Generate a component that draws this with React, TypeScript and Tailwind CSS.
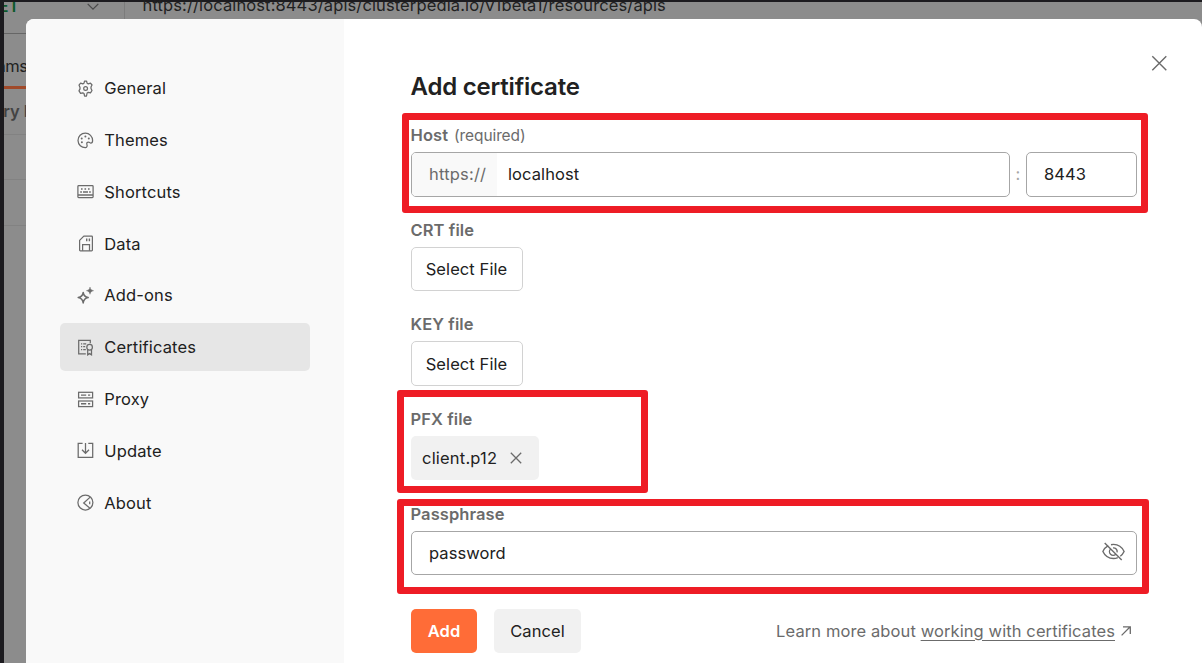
import type { ReactNode } from "react";

const icon = (children: ReactNode) => (
  <svg viewBox="0 0 17 17" className="h-[17px] w-[17px] shrink-0" fill="none" stroke="#6b6b6b" strokeWidth="1.25">
    {children}
  </svg>
);

const GearIcon = icon(
  <>
    <path
      d="M7.6 1h1.9l.6 2.2 1.2.7 2.2-.8 1.5 1.9-1 2v1.5l1 2-1.5 2.4-2.2-.6-1.2.7L9.5 16H7.6L7 13.5l-1.2-.7-2.2.6-1.6-2.5 1-2V7.5L2 5.1l1.6-2 2.2.8L7 3.2z"
      strokeLinejoin="round"
    />
    <circle cx="8.6" cy="8.5" r="1.9" />
  </>
);

const PaletteIcon = icon(
  <>
    <path
      d="M8.6 15.7A7.300 7.300 0 1 1 15.600 8.600c0 1.900-.7 2.600-1.800 2.600-.9 0-1.100-1.200-2.300-1.200-1.500 0-2 .9-1.600 2.200.5 1.500.3 3.300-1.300 3.500z"
      strokeLinejoin="round"
    />
    <g fill="#6b6b6b" stroke="none">
      <circle cx="8.4" cy="4.4" r="1" />
      <circle cx="4.7" cy="6.6" r="1" />
      <circle cx="4.9" cy="10.3" r="1" />
      <circle cx="11.8" cy="6.4" r="1" />
    </g>
  </>
);

const KeyboardIcon = icon(
  <>
    <rect x="0.9" y="2.7" width="15.2" height="11.8" rx="0.8" />
    <path d="M1 12h15" strokeWidth="1.5" />
    <path d="M4 6h1.600M7.500 6h1.600M11 6h1.600M3.200 8.900h1.700M6 8.900h5M12.100 8.900h1.700" strokeWidth="1.5" />
  </>
);

const DiskIcon = icon(
  <>
    <path d="M6.800 1.100h7.800a.8.8 0 0 1 .8.8v13.200a.8.8 0 0 1-.8.8H3.400a.8.8 0 0 1-.8-.8V5.400z" strokeLinejoin="round" />
    <path d="M5.600 15.800V9.500h6.900v6.300" />
    <path d="M9.700 3.600v2.600M12.400 3.600v2.600" strokeWidth="1.4" />
  </>
);

const SparkleIcon = icon(
  <>
    <path
      d="M6.200 5.400c.4 3.200 1.400 4.600 5 5.200-3.600.6-4.600 2-5 5.400-.4-3.400-1.400-4.800-5-5.400 3.600-.6 4.600-2 5-5.200z"
      strokeWidth="1.5"
      strokeLinejoin="round"
    />
    <path
      d="M13 0c.4 2.200 1.100 3 3.600 3.700-2.500.6-3.200 1.400-3.600 3.600-.4-2.200-1.100-3-3.600-3.600C11.900 3 12.600 2.200 13 0z"
      fill="#6b6b6b"
      strokeWidth="0.4"
    />
  </>
);

const CertificateIcon = icon(
  <>
    <path d="M8.800 14.800H1.700V1.300h11.600v3" />
    <path d="M4 4.800h1.200M6.200 4.800h3M4 7.700h1.200M6.200 7.700h2M4 10.600h1.200M6.200 10.600h2.600" />
    <circle cx="12.6" cy="8.2" r="2.8" />
    <path d="M10.700 10.500v5.300l1.900-1.200 1.900 1.200v-5.300" />
  </>
);

const ServerIcon = icon(
  <>
    <rect x="1.6" y="1.3" width="14" height="5.6" />
    <rect x="1.6" y="10" width="14" height="5.6" />
    <path d="M4 4.100h5.200M11 4.100h2.200M4 12.800h5.200M11 12.800h2.200" strokeWidth="1.4" />
  </>
);

const DownloadIcon = icon(
  <>
    <path d="M5.600 1.400H1.200v13.900h14.500V1.400h-4.400" />
    <path d="M8.500 1v10M5 7.800l3.500 3.500L12 7.800" />
  </>
);

const AboutIcon = icon(
  <>
    <circle cx="8.4" cy="8.5" r="7.5" />
    <path d="M13.200 3.100 6.700 9l6 4.900M6.700 9l3.400 2.700" />
    <path d="M12.700 7.500v2.800" />
  </>
);

const navItems = [
  { label: "General", icon: GearIcon },
  { label: "Themes", icon: PaletteIcon },
  { label: "Shortcuts", icon: KeyboardIcon },
  { label: "Data", icon: DiskIcon },
  { label: "Add-ons", icon: SparkleIcon },
  { label: "Certificates", icon: CertificateIcon, active: true },
  { label: "Proxy", icon: ServerIcon },
  { label: "Update", icon: DownloadIcon },
  { label: "About", icon: AboutIcon },
];

function Background() {
  return (
    <div className="flex h-full flex-col border-t-2 border-l-4 border-[#1c1b1f] bg-[#8c8c8c]">
      <div className="flex h-8 shrink-0 border-b border-[#666]">
        <div className="flex w-[121px] shrink-0 justify-between overflow-hidden border-r border-[#7c7c7c] pr-[25px]">
          <span className="-mt-[8px] -ml-[18px] text-[16.5px] font-semibold text-[#0b5a2b]">GET</span>
          <svg viewBox="0 0 12 8" className="mt-px h-2 w-3" fill="none" stroke="#4a4a4a" strokeWidth="1.3">
            <path d="M.7.9 6 6.200 11.300.9" />
          </svg>
        </div>
        <span className="-mt-[9px] ml-[17.5px] text-[16.5px] tracking-[0.12px] whitespace-nowrap">
          https://localhost:8443/apis/clusterpedia.io/v1beta1/resources/apis
        </span>
      </div>
      <div className="flex h-[55px] w-[22px] shrink-0 flex-col justify-center overflow-hidden border-b-3 border-[#a04a2a]">
        <span className="mt-[11px] -ml-[32px] text-[16.5px] tracking-[-0.5px]">Params</span>
      </div>
      <div className="h-[46px] w-[22px] shrink-0 overflow-hidden border-b border-[#828282] pt-[10px] whitespace-nowrap">
        <span className="-ml-[33px] text-[16.5px] font-semibold tracking-[-0.1px] text-[#434343]">Query Params</span>
      </div>
      <div className="h-[45px] shrink-0 border-b border-[#828282]" />
      <div className="h-[46px] shrink-0 border-b border-[#828282]" />
    </div>
  );
}

function Sidebar() {
  return (
    <nav className="flex w-[318px] shrink-0 flex-col gap-[3.3px] bg-[#f9f9f9] pt-[45px] pl-[34px] tracking-[0.14px]">
      {navItems.map((item) => (
        <a
          key={item.label}
          className={
            item.active
              ? "flex h-[48.5px] w-[250px] shrink-0 items-center gap-[10.7px] rounded-[5px] bg-[#e6e6e6] pl-[16.6px]"
              : "flex h-[48.5px] w-[250px] shrink-0 items-center gap-[10.7px] rounded-[5px] pl-[16.6px]"
          }
        >
          {item.icon}
          <span>{item.label}</span>
        </a>
      ))}
    </nav>
  );
}

function Label({ children }: { children: ReactNode }) {
  return <div className="-ml-[0.5px] flex h-6 items-center font-semibold tracking-[0.08px] text-[#6b6b6b]">{children}</div>;
}

function SelectFile({ label }: { label: string }) {
  return (
    <div className="h-[94.4px]">
      <Label>{label}</Label>
      <button className="mt-[5px] flex h-[44.4px] w-28 items-center justify-center rounded-[5px] border border-[#d2d2d2] pr-px">
        Select File
      </button>
    </div>
  );
}

export default function App() {
  return (
    <div className="relative h-[663px] w-[1202px] overflow-hidden font-['Inter',sans-serif] text-[16.5px] leading-6 tracking-[0.09px] text-[#212121]">
      <Background />
      <div className="absolute top-[19px] left-[26px] flex h-[660px] w-[1176px] overflow-hidden rounded-t-lg bg-white">
        <Sidebar />
        <main className="flex w-[793px] shrink-0 flex-col pt-[52px] pl-[67px]">
          <h1 className="-ml-[0.5px] h-[52px] text-[24px] leading-8 font-semibold tracking-[-0.2px]">Add certificate</h1>
          <div className="h-[95px]">
            <Label>
              Host
              <span className="mt-px ml-[6px] text-[15.5px] font-normal tracking-[-0.1px]">(required)</span>
            </Label>
            <div className="mt-[5px] flex h-[45px] items-center">
              <div className="flex h-full w-[599px] items-center overflow-hidden rounded-[5px] border border-[#a6a6a6]">
                <span className="flex h-full w-[85px] items-center bg-[#f9f9f9] pb-px pl-[17px] tracking-[0.2px] text-[#6b6b6b]">
                  https://
                </span>
                <span className="pb-px pl-[11px]">localhost</span>
              </div>
              <span className="w-4 pb-px text-center text-[#a6a6a6]">:</span>
              <div className="flex h-full w-[111px] items-center rounded-[5px] border border-[#a6a6a6] pb-px pl-[17px]">8443</div>
            </div>
          </div>
          <SelectFile label="CRT file" />
          <SelectFile label="KEY file" />
          <div className="h-[95.2px]">
            <Label>PFX file</Label>
            <div className="mt-[5px] flex h-11 w-[128px] items-center justify-between rounded-[5px] bg-[#f1f1f1] pr-[17px] pl-[11px] tracking-[0.2px]">
              client.p12
              <svg viewBox="0 0 12 12" className="h-3 w-3" fill="none" stroke="#6b6b6b" strokeWidth="1.3">
                <path d="m.8.8 10.400 10.400M11.200.8.8 11.200" />
              </svg>
            </div>
          </div>
          <div className="h-[107px]">
            <Label>Passphrase</Label>
            <div className="mt-[5px] flex h-11 items-center justify-between rounded-[5px] border border-[#a6a6a6] pr-[11px] pl-[17px]">
              password
              <svg viewBox="0 0 23 19" className="-mt-[2px] h-[19px] w-[23px]" fill="none" stroke="#6b6b6b" strokeWidth="1.4">
                <path d="M6.200 3.600C4 4.800 2 7 .9 9.500c2 4.300 6 7 10.600 7 1.600 0 3-.3 4.300-.9M9 2.700c.8-.2 1.600-.3 2.500-.3 4.600 0 8.600 2.800 10.600 7.100-.9 1.900-2.200 3.500-3.800 4.700" />
                <path d="M8.600 7a3.700 3.700 0 0 0 5.200 5.300M11 5.900a3.700 3.700 0 0 1 4.100 4.400M2.700.9l17 17" />
              </svg>
            </div>
          </div>
          <div className="flex h-11 shrink-0 items-center">
            <button className="h-11 w-[66px] rounded-[5px] bg-[#ff6c37] font-semibold text-white">Add</button>
            <button className="ml-[17px] h-11 w-[87px] rounded-[5px] bg-[#f1f1f1]">Cancel</button>
            <p className="ml-auto tracking-[0.1px] text-[#6b6b6b]">
              Learn more about <a className="underline underline-offset-3">working with certificates</a>
            </p>
            <svg viewBox="0 0 10 10" className="mr-[6px] ml-[6px] h-[10px] w-[10px]" fill="none" stroke="#6b6b6b" strokeWidth="1.3">
              <path d="M.6 9.400 9.200.8M2 .8h7.300v7.300" />
            </svg>
          </div>
        </main>
        <svg viewBox="0 0 16 16" className="mt-[36px] ml-[14px] h-4 w-4" fill="none" stroke="#6b6b6b" strokeWidth="1.4">
          <path d="m1.300 1.300 14 14M15.300 1.300l-14 14" />
        </svg>
      </div>
      <div className="absolute top-[113px] left-[402px] h-[100px] w-[746px] rounded-[3px] border-7 border-[#ee1c25]" />
      <div className="absolute top-[390px] left-[397px] h-[103px] w-[251px] rounded-[3px] border-7 border-[#ee1c25]" />
      <div className="absolute top-[499px] left-[397px] h-[95px] w-[752px] rounded-[3px] border-7 border-[#ee1c25]" />
    </div>
  );
}
